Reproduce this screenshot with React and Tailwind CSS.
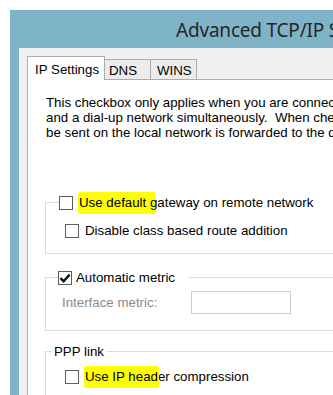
import React from "react";

function Box({ checked }) {
  return (
    <span className="inline-flex items-center justify-center w-[14px] h-[14px] border border-[#5c5c5c] bg-white shrink-0">
      {checked && (
        <svg width="12" height="12" viewBox="0 0 12 12">
          <path d="M1.5 6.2 L4.6 9.2 L10.6 2.6" fill="none" stroke="#111" strokeWidth="2.4" strokeLinejoin="miter" />
        </svg>
      )}
    </span>
  );
}

function Marked({ children, width }) {
  return (
    <span className="relative inline-block">
      <span className={`absolute left-[-1px] top-[-1px] bottom-[-2px] bg-[#ffff00] rounded-[3px] ${width}`} />
      <span className="relative">{children}</span>
    </span>
  );
}

export default function App() {
  return (
    <div
      className="w-[333px] h-[395px] overflow-hidden bg-white pt-[10px] pl-[10px]"
      style={{ fontFamily: '"Liberation Sans", Arial, sans-serif' }}
    >
      <div className="bg-[#7fb3c7] pl-[9px] h-[385px] w-[420px]">
        <div
          className="h-[38px] pl-[157px] pt-[8px] text-[19px] tracking-[-0.2px] leading-[24px] text-[#262626] whitespace-nowrap"
          style={{ fontFamily: '"Noto Sans", "Open Sans", sans-serif' }}
        >
          Advanced TCP/IP Settings
        </div>
        <div className="bg-[#f0f0f0] pl-[8px] pt-[8px] h-[347px]">
          {/* tabs */}
          <div className="flex items-end h-[23px] text-[13.3px] text-black">
            <div className="relative z-10 -mb-px h-[24px] w-[78px] bg-white border border-b-0 border-[#acacac] pl-[7px] pt-[3px]">
              IP Settings
            </div>
            <div className="h-[20px] w-[46px] bg-[#ececec] border border-l-0 border-b-0 border-[#acacac] pl-[4px] pt-[1px]">
              DNS
            </div>
            <div className="h-[20px] w-[46px] bg-[#ececec] border border-l-0 border-b-0 border-[#acacac] pl-[6px] pt-[1px]">
              WINS
            </div>
          </div>

          {/* panel */}
          <div className="bg-white border-l border-t border-[#acacac] pl-[17px] pt-[15px] h-[320px] text-[13.3px] text-black">
            <div className="ml-px leading-[15px] whitespace-nowrap">
              <div>This checkbox only applies when you are connected to a local network</div>
              <div>and a dial-up network simultaneously.&nbsp; When checked, data that cannot</div>
              <div>be sent on the local network is forwarded to the dial-up network.</div>
            </div>

            <fieldset className="mt-[53px] w-[400px] border border-[#d5dde2] pb-[13px]">
              <legend className="ml-[13px] pr-[30px]">
                <div className="flex items-center h-[19px]">
                  <Box />
                  <span className="ml-[6px] whitespace-nowrap">
                    <Marked width="w-[78px]">Use default g</Marked>ateway on remote network
                  </span>
                </div>
              </legend>
              <div className="flex items-center h-[19px] mt-[9px] ml-[19px]">
                <Box />
                <span className="ml-[6px] whitespace-nowrap">Disable class based route addition</span>
              </div>
            </fieldset>

            <fieldset className="mt-[14px] w-[400px] border border-[#d5dde2] pb-[16px]">
              <legend className="ml-[12px] pr-[13px]">
                <div className="flex items-center h-[19px]">
                  <Box checked />
                  <span className="ml-[4px] whitespace-nowrap">Automatic metric</span>
                </div>
              </legend>
              <div className="flex items-center mt-[4px] ml-[16px]">
                <span className="w-[129px] text-[#8a8a8a] whitespace-nowrap">Interface metric:</span>
                <span className="w-[100px] h-[23px] border border-[#c6d0cb] bg-white" />
              </div>
            </fieldset>

            <fieldset className="mt-[11px] w-[400px] h-[60px] border border-[#d5dde2]">
              <legend className="ml-[6px] px-[2px] pr-[3px]">
                <div className="flex items-center h-[19px] whitespace-nowrap">PPP link</div>
              </legend>
              <div className="flex items-center h-[19px] mt-[6px] ml-[19px]">
                <Box />
                <span className="ml-[6px] whitespace-nowrap">
                  <Marked width="w-[75px]">Use IP head</Marked>er compression
                </span>
              </div>
            </fieldset>
          </div>
        </div>
      </div>
    </div>
  );
}
